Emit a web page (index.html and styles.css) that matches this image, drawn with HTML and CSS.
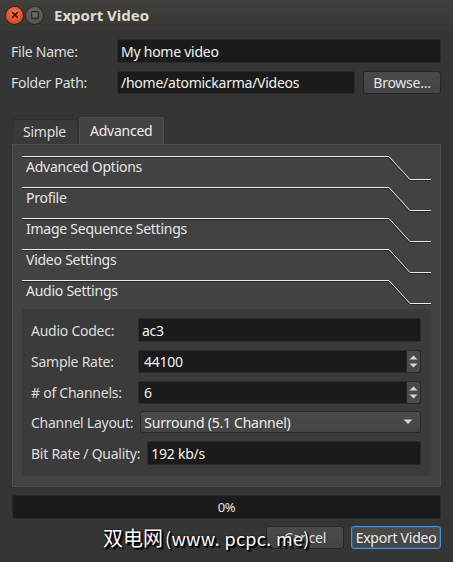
FILE: index.html
```html
<!DOCTYPE html>
<html>
<head>
<meta charset="utf-8">
<link rel="stylesheet" href="styles.css">
</head>
<body>
<div class="window">
  <div class="titlebar">
    <span class="wbtn close"><svg width="16" height="16" viewBox="0 0 16 16"><path d="M5.6 5.6 L10.4 10.4 M10.4 5.6 L5.6 10.4" stroke="#3a1a10" stroke-width="1.6" stroke-linecap="round"/></svg></span>
    <span class="wbtn mini"><svg width="16" height="16" viewBox="0 0 16 16"><rect x="4.5" y="4.5" width="7" height="7" rx="1.5" fill="none" stroke="#2e2e2c" stroke-width="1.4"/></svg></span>
    <span class="title">Export Video</span>
  </div>

  <div class="content">
    <div class="frow">
      <span class="flabel">File Name:</span>
      <div class="field grow">My home video</div>
    </div>
    <div class="frow">
      <span class="flabel">Folder Path:</span>
      <div class="field grow">/home/atomickarma/Videos</div>
      <div class="button browse">Browse...</div>
    </div>

    <div class="tabs">
      <div class="tab">Simple</div>
      <div class="tab active">Advanced</div>
    </div>
    <div class="pane">
      <div class="section">
        <svg class="sline" width="409" height="26" viewBox="0 0 409 26"><polyline points="0,1.5 366.5,1.5 387.5,24.5 409,24.5" fill="none" stroke="#262626" stroke-width="1"/><polyline points="0,0.5 367,0.5 388,23.5 409,23.5" fill="none" stroke="#ececec" stroke-width="1"/></svg>
        <span class="stitle">Advanced Options</span>
      </div>
      <div class="section">
        <svg class="sline" width="409" height="26" viewBox="0 0 409 26"><polyline points="0,1.5 366.5,1.5 387.5,24.5 409,24.5" fill="none" stroke="#262626" stroke-width="1"/><polyline points="0,0.5 367,0.5 388,23.5 409,23.5" fill="none" stroke="#ececec" stroke-width="1"/></svg>
        <span class="stitle">Profile</span>
      </div>
      <div class="section">
        <svg class="sline" width="409" height="26" viewBox="0 0 409 26"><polyline points="0,1.5 366.5,1.5 387.5,24.5 409,24.5" fill="none" stroke="#262626" stroke-width="1"/><polyline points="0,0.5 367,0.5 388,23.5 409,23.5" fill="none" stroke="#ececec" stroke-width="1"/></svg>
        <span class="stitle">Image Sequence Settings</span>
      </div>
      <div class="section">
        <svg class="sline" width="409" height="26" viewBox="0 0 409 26"><polyline points="0,1.5 366.5,1.5 387.5,24.5 409,24.5" fill="none" stroke="#262626" stroke-width="1"/><polyline points="0,0.5 367,0.5 388,23.5 409,23.5" fill="none" stroke="#ececec" stroke-width="1"/></svg>
        <span class="stitle">Video Settings</span>
      </div>
      <div class="section last">
        <svg class="sline" width="409" height="26" viewBox="0 0 409 26"><polyline points="0,1.5 366.5,1.5 387.5,24.5 409,24.5" fill="none" stroke="#262626" stroke-width="1"/><polyline points="0,0.5 367,0.5 388,23.5 409,23.5" fill="none" stroke="#ececec" stroke-width="1"/></svg>
        <span class="stitle">Audio Settings</span>
      </div>

      <div class="group">
        <div class="grow-row">
          <span class="glabel">Audio Codec:</span>
          <div class="field grow">ac3</div>
        </div>
        <div class="grow-row">
          <span class="glabel">Sample Rate:</span>
          <div class="field grow spin">
            <span class="spintext">44100</span>
            <span class="spinbtn"><svg width="13" height="21" viewBox="0 0 13 21"><path d="M2.5 8.5 L6.5 4.5 L10.5 8.5 Z" fill="#d6d6d6"/><path d="M2.5 12.5 L6.5 16.5 L10.5 12.5 Z" fill="#d6d6d6"/></svg></span>
          </div>
        </div>
        <div class="grow-row">
          <span class="glabel"># of Channels:</span>
          <div class="field grow spin">
            <span class="spintext">6</span>
            <span class="spinbtn"><svg width="13" height="21" viewBox="0 0 13 21"><path d="M2.5 8.5 L6.5 4.5 L10.5 8.5 Z" fill="#d6d6d6"/><path d="M2.5 12.5 L6.5 16.5 L10.5 12.5 Z" fill="#d6d6d6"/></svg></span>
          </div>
        </div>
        <div class="grow-row">
          <span class="glabel">Channel Layout:</span>
          <div class="combo grow">
            <span class="combotext">Surround (5.1 Channel)</span>
            <svg class="carrow" width="10" height="6" viewBox="0 0 10 6"><path d="M0.5 0.5 L9.5 0.5 L5 5 Z" fill="#d6d6d6"/></svg>
          </div>
        </div>
        <div class="grow-row">
          <span class="glabel">Bit Rate / Quality:</span>
          <div class="field grow">192 kb/s</div>
        </div>
      </div>
    </div>

    <div class="progress">0%</div>

    <div class="buttons">
      <div class="button cancel">Cancel</div>
      <div class="button export">Export Video</div>
    </div>
  </div>

  <div class="watermark">双电网<span class="wm-latin">(www. pcpc. me)</span></div>
</div>
</body>
</html>
```
FILE: styles.css
```css
* { box-sizing: border-box; }
html, body { margin: 0; padding: 0; }
body {
  width: 453px;
  height: 562px;
  background: #353535;
  font-family: "Noto Sans", "Open Sans", sans-serif;
  font-size: 14px;
  letter-spacing: -0.25px;
  color: #dedede;
  overflow: hidden;
}
.window {
  position: relative;
  width: 453px;
  height: 562px;
}
.titlebar {
  height: 30px;
  background: linear-gradient(#403f3b, #393834);
  display: flex;
  align-items: center;
  padding-left: 6px;
}
.wbtn {
  width: 17px;
  height: 17px;
  border-radius: 50%;
  display: flex;
  align-items: center;
  justify-content: center;
  margin-right: 3px;
}
.close {
  background: radial-gradient(circle at 50% 35%, #f47a53, #df4a1f 70%, #b8391a);
  box-shadow: 0 0 0 1px #2a2926;
}
.mini {
  background: radial-gradient(circle at 50% 35%, #6d6c67, #55544f 70%, #464541);
  box-shadow: 0 0 0 1px #2a2926;
}
.title {
  margin-left: 8px;
  font-weight: bold;
  font-size: 15px;
  letter-spacing: 0;
  color: #dfdbd2;
}
.content {
  padding: 9px 12px 0 11px;
  display: flex;
  flex-direction: column;
}
.frow {
  display: flex;
  align-items: center;
  height: 24px;
  margin-bottom: 8px;
}
.frow + .frow { height: 23px; }
.flabel {
  width: 106px;
  color: #dedede;
}
.grow { flex: 1; }
.field {
  height: 100%;
  background: #1b1b1b;
  border: 1px solid #2a2a2a;
  border-radius: 2px;
  color: #f2f2f2;
  padding-left: 3px;
  display: flex;
  align-items: center;
}
.button {
  height: 23px;
  background: linear-gradient(#4a4a4a, #444444);
  border: 1px solid #262626;
  border-radius: 3px;
  display: flex;
  align-items: center;
  justify-content: center;
  color: #e4e4e4;
}
.browse {
  width: 78px;
  margin-left: 8px;
}
.tabs {
  display: flex;
  align-items: flex-end;
  margin-top: 15px;
  padding-left: 1px;
  height: 27px;
}
.tab {
  height: 25px;
  width: 66px;
  background: #3a3a3a;
  border: 1px solid #2c2c2c;
  border-bottom: none;
  border-radius: 3px 3px 0 0;
  padding-left: 10px;
  padding-bottom: 1px;
  display: flex;
  align-items: center;
  color: #dedede;
}
.tab.active {
  height: 27px;
  width: 85px;
  margin-left: 1px;
  background: #434343;
  border-color: #4d4d4d;
  color: #ececec;
  padding-bottom: 2px;
}
.pane {
  height: 343px;
  margin-left: 1px;
  background: #424242;
  border: 1px solid #4d4d4d;
  padding: 11px 9px 0 9px;
  display: flex;
  flex-direction: column;
}
.section {
  display: grid;
  height: 31px;
}
.section > * { grid-area: 1 / 1; }
.sline { display: block; }
.stitle {
  padding: 2px 0 0 4px;
  line-height: 17px;
  color: #e6e6e6;
}
.section.last { height: 29px; }
.group {
  height: 167px;
  background: #3b3b3b;
  padding: 9px 10px 0 9px;
  display: flex;
  flex-direction: column;
  gap: 8px;
}
.grow-row {
  display: flex;
  align-items: center;
  height: 24px;
  gap: 7px;
}
.grow-row:nth-child(2), .grow-row:nth-child(3) { height: 23px; }
.grow-row:nth-child(4) { height: 22px; margin-top: -1px; }
.glabel {
  min-width: 100px;
  white-space: nowrap;
  color: #dedede;
}
.spin {
  padding-left: 5px;
  padding-right: 0;
  justify-content: space-between;
}
.spinbtn {
  width: 14px;
  height: 100%;
  background: #4a4a4a;
  border-left: 1px solid #2a2a2a;
  display: flex;
  align-items: center;
  justify-content: center;
  border-radius: 0 2px 2px 0;
}
.combo {
  height: 100%;
  background: linear-gradient(#4a4a4a, #454545);
  border: 1px solid #2a2a2a;
  border-radius: 3px;
  padding: 0 7px 0 3px;
  display: flex;
  align-items: center;
  justify-content: space-between;
  color: #eeeeee;
}
.progress {
  margin-top: 8px;
  margin-left: 1px;
  height: 24px;
  background: #1b1b1b;
  border: 1px solid #2a2a2a;
  border-radius: 2px;
  display: flex;
  align-items: center;
  justify-content: center;
  font-size: 13px;
  color: #e6e6e6;
}
.buttons {
  margin-top: 7px;
  display: flex;
  justify-content: flex-end;
  gap: 7px;
}
.cancel { width: 78px; }
.export {
  width: 90px;
  border-color: #4a90d9;
  box-shadow: inset 0 0 0 1px #2f5d8a;
  color: #ececec;
}
.watermark {
  position: absolute;
  left: 103px;
  top: 525px;
  font-family: "Noto Sans CJK SC", sans-serif;
  font-size: 20px;
  line-height: 26px;
  letter-spacing: 0;
  color: #ffffff;
  text-shadow: 1px 1px 0 #000, 2px 2px 1px #000, 0 0 2px #000;
  white-space: nowrap;
}
.wm-latin {
  font-size: 18px;
  margin-left: 2px;
  letter-spacing: 0.3px;
}
```
